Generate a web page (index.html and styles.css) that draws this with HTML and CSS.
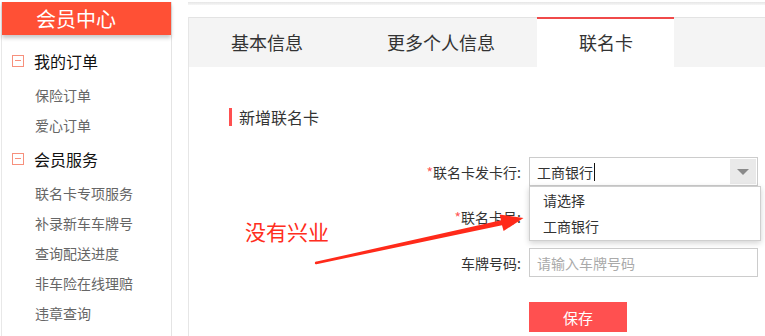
FILE: index.html
```html
<!DOCTYPE html>
<html lang="zh-CN">
<head>
<meta charset="utf-8">
<title>会员中心 - 联名卡</title>
<link rel="stylesheet" href="styles.css">
</head>
<body>
<div class="page">
  <aside class="sidebar">
    <div class="side-head">会员中心</div>
    <div class="group">
      <div class="group-title"><span class="minus"></span>我的订单</div>
      <a class="item">保险订单</a>
      <a class="item">爱心订单</a>
    </div>
    <div class="group">
      <div class="group-title"><span class="minus"></span>会员服务</div>
      <a class="item">联名卡专项服务</a>
      <a class="item">补录新车车牌号</a>
      <a class="item">查询配送进度</a>
      <a class="item">非车险在线理赔</a>
      <a class="item">违章查询</a>
    </div>
  </aside>

  <main class="main">
    <div class="topstrip"></div>
    <div class="panel">
      <nav class="tabs">
        <a class="tab">基本信息</a>
        <a class="tab">更多个人信息</a>
        <a class="tab active">联名卡</a>
      </nav>
      <section class="content">
        <h3 class="sec-title">新增联名卡</h3>
        <form class="form">
          <label class="label"><span class="req">*</span>联名卡发卡行:</label>
          <div class="select">
            <span class="select-value">工商银行<span class="caret"></span></span>
            <span class="select-arrow"><i class="tri"></i></span>
            <ul class="dropdown">
              <li>请选择</li>
              <li>工商银行</li>
            </ul>
          </div>

          <label class="label"><span class="req">*</span>联名卡号:</label>
          <div class="input"></div>

          <label class="label">车牌号码:</label>
          <div class="input placeholder">请输入车牌号码</div>

          <span></span>
          <button type="button" class="btn-save">保存</button>
        </form>
      </section>
    </div>
  </main>

  <div class="note">没有兴业</div>
  <svg class="arrow" width="765" height="336" viewBox="0 0 765 336">
    <polygon points="315.6,261.8 501,220.3 499.6,214.4 523.5,218 503.6,231 502,225.3 316.4,264.2" fill="#ff2a1a"/>
    <circle cx="316" cy="263" r="1.2" fill="#ff2a1a"/>
  </svg>
</div>
</body>
</html>
```

FILE: styles.css
```css
html, body {
  margin: 0;
  padding: 0;
  background: #fff;
  font-family: "Noto Sans CJK SC", "Noto Sans", sans-serif;
  color: #333;
}

.page {
  position: relative;
  width: 765px;
  height: 336px;
  overflow: hidden;
  display: flex;
  align-items: stretch;
  padding: 2px 0 0 1px;
  box-sizing: border-box;
}

/* Sidebar */
.sidebar {
  width: 171px;
  flex: none;
  border-left: 1px solid #e8e8e8;
  border-right: 1px solid #e4e4e4;
  box-sizing: border-box;
}

.side-head {
  height: 33px;
  line-height: 33px;
  background: #ff5035;
  color: #fff;
  font-size: 20px;
  padding-left: 34px;
  box-shadow: 0 3px 4px rgba(0, 0, 0, 0.22);
  margin-bottom: 11px;
}

.group {
  display: flex;
  flex-direction: column;
  margin-bottom: 4px;
}

.group-title {
  display: flex;
  align-items: center;
  height: 30px;
  font-size: 16px;
  color: #111;
  margin-bottom: 4px;
}

.minus {
  position: relative;
  width: 12px;
  height: 12px;
  box-sizing: border-box;
  border: 1px solid #f7907c;
  margin: 0 10px 0 10px;
}

.minus::after {
  content: "";
  position: absolute;
  left: 2px;
  right: 2px;
  top: 4px;
  height: 1px;
  background: #f7907c;
}

.item {
  display: block;
  height: 30px;
  line-height: 30px;
  font-size: 14px;
  color: #666;
  padding-left: 33px;
}

/* Main */
.main {
  flex: none;
  width: 600px;
  margin-left: 16px;
}

.topstrip {
  height: 3px;
  background: linear-gradient(#e6e6e6, #f6f6f6);
}

.panel {
  margin-top: 12px;
  border-left: 1px solid #e6e6e6;
  height: 400px;
}

.tabs {
  display: flex;
  height: 50px;
  background: #f4f4f4;
  box-shadow: inset 0 1px 0 #e3e3e3;
}

.tab {
  display: block;
  padding: 0 42px;
  line-height: 50px;
  font-size: 18px;
  color: #333;
}

.tab.active {
  background: #fff;
  border-top: 2px solid #f04a4a;
  line-height: 47px;
  padding: 0 41px 0 42px;
}

.content {
  padding: 41px 0 0 40px;
}

.sec-title {
  margin: 0;
  font-weight: normal;
  font-size: 16px;
  line-height: 18px;
  color: #333;
  border-left: 3px solid #ff5050;
  padding-left: 7px;
}

.form {
  display: grid;
  grid-template-columns: 292px 229px;
  column-gap: 8px;
  row-gap: 16.5px;
  margin-top: 31px;
  align-items: center;
}

.label {
  text-align: right;
  font-size: 14px;
  color: #333;
  line-height: 20px;
}

.req {
  color: #ff5a5a;
}

.select,
.input {
  position: relative;
  height: 29px;
  box-sizing: border-box;
  border: 1px solid #ccc;
  font-size: 14px;
  display: flex;
  align-items: center;
  padding-left: 7px;
  background: #fff;
}

.select-value {
  flex: 1;
  color: #333;
  display: flex;
  align-items: center;
}

.caret {
  display: inline-block;
  width: 1px;
  height: 18px;
  background: #111;
  margin-left: 1px;
}

.select-arrow {
  width: 26px;
  height: 25px;
  background: #e9e9e9;
  margin-right: 1px;
  display: flex;
  align-items: center;
  justify-content: center;
}

.tri {
  width: 0;
  height: 0;
  border-left: 6px solid transparent;
  border-right: 6px solid transparent;
  border-top: 6px solid #8a8a8a;
}

.dropdown {
  position: absolute;
  left: -1px;
  top: 28px;
  width: 232px;
  box-sizing: border-box;
  margin: 0;
  padding: 0 0 1px;
  list-style: none;
  background: #fff;
  border: 1px solid #cfcfcf;
  box-shadow: 0 2px 6px rgba(0, 0, 0, 0.18);
  z-index: 2;
}

.dropdown li {
  height: 26px;
  line-height: 26px;
  padding-left: 13px;
  font-size: 14px;
  color: #333;
}

.placeholder {
  color: #aaa;
}

.btn-save {
  margin-top: 8.5px;
  width: 98px;
  height: 30px;
  border: none;
  background: #ff5050;
  color: #fff;
  font-family: inherit;
  font-size: 15px;
  padding: 0;
}

/* Annotation overlay */
.note {
  position: absolute;
  left: 245px;
  top: 218px;
  font-size: 21px;
  line-height: 26px;
  color: #ff2d20;
  z-index: 3;
}

.arrow {
  position: absolute;
  left: 0;
  top: 0;
  pointer-events: none;
  z-index: 4;
}
```
